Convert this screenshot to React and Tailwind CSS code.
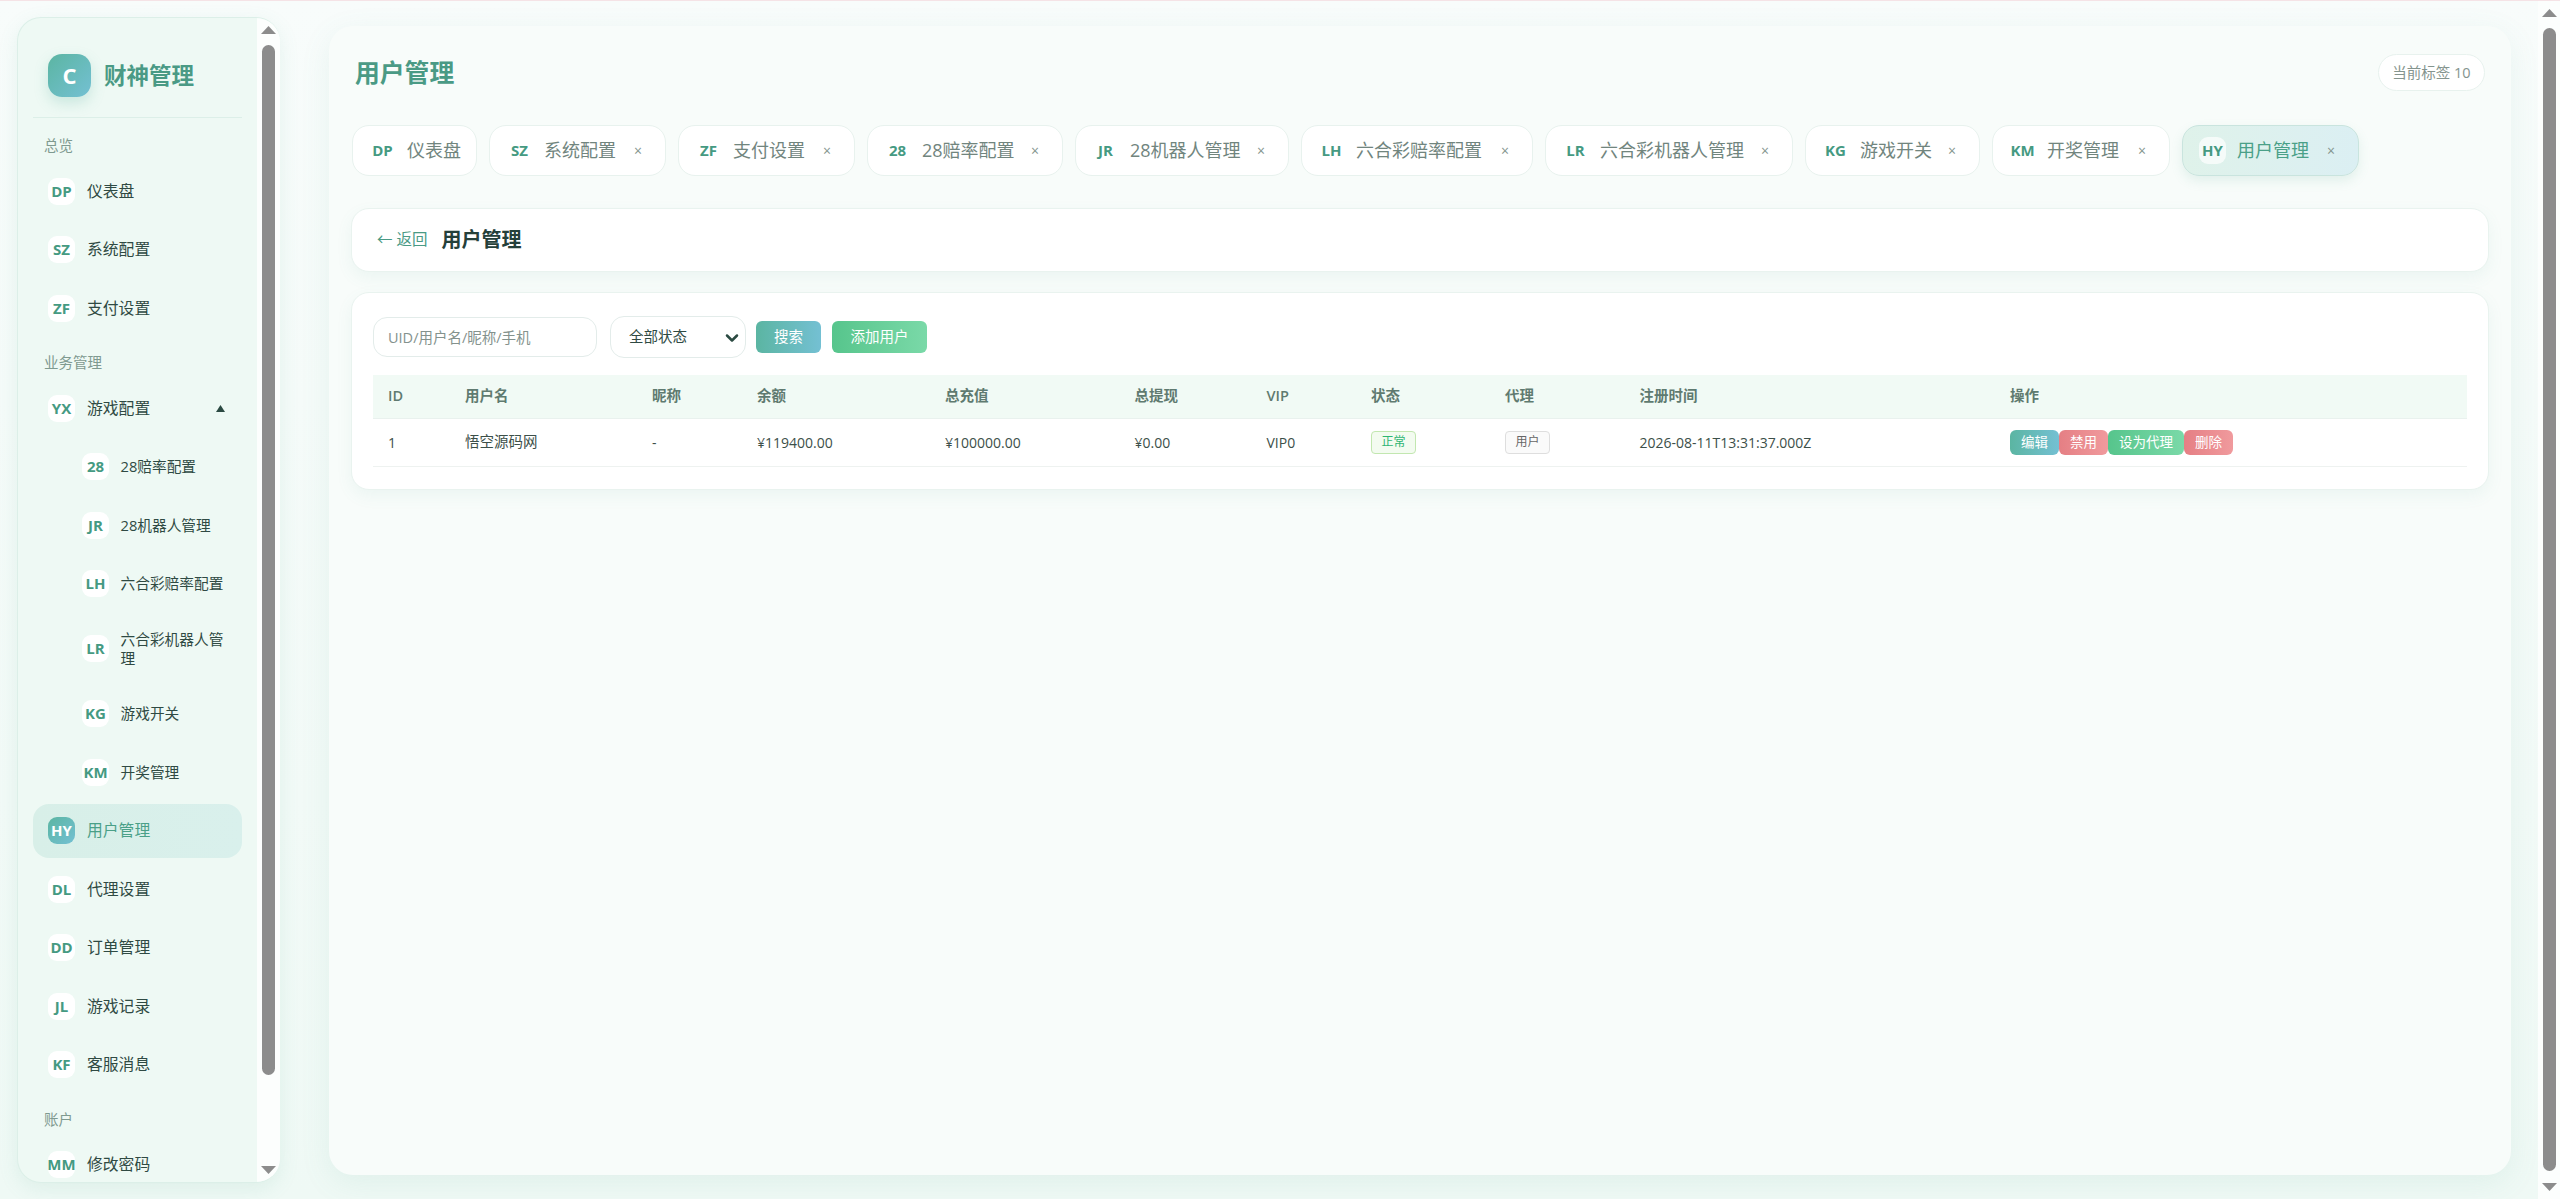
import { ChevronDown } from "lucide-react";

const tabs = [
  { code: "DP", label: "仪表盘", w: "w-[125px]", fixed: true },
  { code: "SZ", label: "系统配置", w: "w-[177px]" },
  { code: "ZF", label: "支付设置", w: "w-[177px]" },
  { code: "28", label: "28赔率配置", w: "w-[196px]" },
  { code: "JR", label: "28机器人管理", w: "w-[214px]" },
  { code: "LH", label: "六合彩赔率配置", w: "w-[232px]" },
  { code: "LR", label: "六合彩机器人管理", w: "w-[248px]" },
  { code: "KG", label: "游戏开关", w: "w-[175px]" },
  { code: "KM", label: "开奖管理", w: "w-[178px]" },
  { code: "HY", label: "用户管理", w: "w-[177px]", active: true },
];

const columns = [
  { label: "ID", w: "w-[77px]" },
  { label: "用户名", w: "w-[187px]" },
  { label: "昵称", w: "w-[105px]" },
  { label: "余额", w: "w-[188px]" },
  { label: "总充值", w: "w-[189.5px]" },
  { label: "总提现", w: "w-[132px]" },
  { label: "VIP", w: "w-[104.5px]" },
  { label: "状态", w: "w-[134px]" },
  { label: "代理", w: "w-[134.5px]" },
  { label: "注册时间", w: "w-[370.5px]" },
  { label: "操作", w: "w-[472px]" },
];

function Triangle({ down, className }) {
  return (
    <svg viewBox="0 0 15 8" preserveAspectRatio="none" className={className}>
      <polygon points={down ? "0,0 15,0 7.5,8" : "7.5,0 15,8 0,8"} fill="currentColor" />
    </svg>
  );
}

function Scrollbar({ thumb, wide }) {
  return (
    <div className={`flex shrink-0 flex-col items-center bg-[#fcfefd] ${wide}`}>
      <Triangle className="mt-[8px] h-[8px] w-[15px] shrink-0 text-[#8c8c8c]" />
      <div className={`mt-[11px] w-[13px] shrink-0 rounded-full bg-[#8c8c8c] ${thumb}`} />
      <Triangle down className="mt-auto mb-[8px] h-[8px] w-[15px] shrink-0 text-[#8c8c8c]" />
    </div>
  );
}

function SectionLabel({ children }) {
  return <div className="mb-[8px] mt-[18px] pl-[11px] text-[14.5px] leading-[20px] text-[#7f9a90]">{children}</div>;
}

function NavItem({ code, label, sub, open, active }) {
  return (
    <div
      className={`mb-[4.5px] flex min-h-[54px] items-center rounded-[16px] pr-[15px] ${sub ? "pl-[49px]" : "pl-[15px]"} ${
        active ? "bg-gradient-to-r from-[#d8efe8] to-[#d9f0ec] text-[#4aa088]" : "text-[#2f4a43]"
      }`}
    >
      <span
        className={`flex h-[27px] w-[27px] shrink-0 items-center justify-center rounded-[9px] text-[15px] font-bold ${
          active ? "bg-gradient-to-br from-[#5bb5a2] to-[#74c0d3] text-white" : "bg-white text-[#459a82]"
        }`}
      >
        {code}
      </span>
      <span className={`py-[14.5px] leading-[19px] ${sub ? "ml-[11.5px] text-[14.7px]" : "ml-[12px] text-[15.8px]"}`}>{label}</span>
      {open && <Triangle className="ml-auto mr-[2px] h-[7px] w-[9px] text-[#2b4a42]" />}
    </div>
  );
}

function Sidebar() {
  return (
    <aside className="ml-[17px] mt-[16px] flex h-[1166px] w-[263px] shrink-0 overflow-hidden rounded-[24px] border border-r-0 border-[#dcefe8] bg-[#eef9f4] shadow-[0_6px_20px_rgba(90,170,150,0.12)]">
      <div className="w-[239px] shrink-0 overflow-hidden px-[15px]">
        <div className="flex items-center border-b border-[#dcefe8] px-[15px] pb-[20px] pt-[36px]">
          <span className="flex h-[43px] w-[43px] items-center justify-center rounded-[14px] bg-gradient-to-br from-[#5bb5a2] to-[#74c0d3] text-[22px] font-bold text-white shadow-[0_6px_14px_rgba(90,180,160,0.25)]">
            C
          </span>
          <span className="ml-[13px] text-[22.5px] font-bold text-[#4a9a85]">财神管理</span>
        </div>
        <SectionLabel>总览</SectionLabel>
        <NavItem code="DP" label="仪表盘" />
        <NavItem code="SZ" label="系统配置" />
        <NavItem code="ZF" label="支付设置" />
        <SectionLabel>业务管理</SectionLabel>
        <NavItem code="YX" label="游戏配置" open />
        <NavItem code="28" label="28赔率配置" sub />
        <NavItem code="JR" label="28机器人管理" sub />
        <NavItem code="LH" label="六合彩赔率配置" sub />
        <NavItem code="LR" label="六合彩机器人管理" sub />
        <NavItem code="KG" label="游戏开关" sub />
        <NavItem code="KM" label="开奖管理" sub />
        <NavItem code="HY" label="用户管理" active />
        <NavItem code="DL" label="代理设置" />
        <NavItem code="DD" label="订单管理" />
        <NavItem code="JL" label="游戏记录" />
        <NavItem code="KF" label="客服消息" />
        <SectionLabel>账户</SectionLabel>
        <NavItem code="MM" label="修改密码" />
      </div>
      <Scrollbar wide="w-[23px]" thumb="h-[1030px]" />
    </aside>
  );
}

function Tab({ code, label, w, fixed, active }) {
  return (
    <div
      className={`flex h-[51px] shrink-0 items-center rounded-[17px] border pl-[16px] ${w} ${
        active
          ? "border-[#c9e4de] bg-gradient-to-r from-[#dff2ea] to-[#dbeff3] text-[#4aa088] shadow-[0_5px_12px_rgba(90,170,150,0.14)]"
          : "border-[#e8f2ee] bg-white text-[#71857e]"
      }`}
    >
      <span className={`flex h-[27px] w-[27px] shrink-0 items-center justify-center rounded-[9px] text-[15px] font-bold text-[#459a82] ${active ? "bg-[#f5fbf9]" : ""}`}>
        {code}
      </span>
      <span className="ml-[11px] text-[18px] whitespace-nowrap">{label}</span>
      {!fixed && <span className="ml-auto mr-[23px] text-[14px] leading-none text-[#84948e]">×</span>}
    </div>
  );
}

function ActionButton({ tone, children }) {
  return (
    <button className={`h-[25px] rounded-[6px] bg-gradient-to-r px-[11px] text-[13.5px] text-white ${tone}`}>{children}</button>
  );
}

function UsersTable() {
  const cell = "px-[15px] text-[14.5px] text-[#3c4f49] font-normal";
  const latin = "px-[15px] text-[14px] text-[#3c4f49] font-normal";
  return (
    <table className="w-[2094px] table-fixed border-collapse">
      <thead>
        <tr className="h-[43px] border-b border-[#e9f1ee] bg-[#f1faf5]">
          {columns.map((col) => (
            <th key={col.label} className={`${col.w} px-[15px] text-left text-[14.5px] font-semibold text-[#5f7a70]`}>
              {col.label}
            </th>
          ))}
        </tr>
      </thead>
      <tbody>
        <tr className="h-[48px] border-b border-[#eef2f0]">
          <td className={latin}>1</td>
          <td className={cell}>悟空源码网</td>
          <td className={latin}>-</td>
          <td className={latin}>¥119400.00</td>
          <td className={latin}>¥100000.00</td>
          <td className={latin}>¥0.00</td>
          <td className={latin}>VIP0</td>
          <td className={cell}>
            <span className="flex h-[23px] w-[45px] items-center justify-center rounded-[4px] border border-[#c2e7b0] bg-[#f3fbf0] text-[12px] text-[#2fb573]">正常</span>
          </td>
          <td className={cell}>
            <span className="flex h-[23px] w-[45px] items-center justify-center rounded-[4px] border border-[#dedede] bg-[#fafafa] text-[12px] text-[#666666]">用户</span>
          </td>
          <td className={latin}>2026-08-11T13:31:37.000Z</td>
          <td className={cell}>
            <div className="flex">
              <ActionButton tone="from-[#5bb5a2] to-[#74c0d3]">编辑</ActionButton>
              <ActionButton tone="from-[#e57f84] to-[#f09a9d]">禁用</ActionButton>
              <ActionButton tone="from-[#56c58c] to-[#7ad9a8]">设为代理</ActionButton>
              <ActionButton tone="from-[#e57f84] to-[#f09a9d]">删除</ActionButton>
            </div>
          </td>
        </tr>
      </tbody>
    </table>
  );
}

function MainPanel() {
  return (
    <main className="ml-[49px] mt-[25px] h-[1149px] w-[2182px] shrink-0 rounded-[24px] bg-[#f8fcfa] shadow-[0_8px_30px_rgba(90,170,150,0.10)]">
      <div className="flex items-start justify-between pl-[26px] pr-[26px] pt-[28px]">
        <h1 className="text-[24.8px] leading-[36px] font-bold text-[#4a9a85]">用户管理</h1>
        <div className="flex h-[37px] w-[107px] items-center justify-center rounded-full border border-[#e8f2ee] bg-white text-[14.5px] text-[#84948e]">
          当前标签 10
        </div>
      </div>
      <div className="mt-[34px] flex gap-[12px] pl-[23px]">
        {tabs.map((tab) => (
          <Tab key={tab.code} {...tab} />
        ))}
      </div>
      <div className="mx-[22px] mt-[32px] flex h-[64px] items-center rounded-[18px] border border-[#e9f3ef] bg-white px-[25px] shadow-[0_6px_16px_rgba(90,170,150,0.08)]">
        <span className="text-[15.5px] text-[#4a9a85]">← 返回</span>
        <span className="ml-[14px] text-[20px] font-bold text-[#25403a]">用户管理</span>
      </div>
      <div className="mx-[22px] mt-[20px] h-[198px] rounded-[18px] border border-[#e9f3ef] bg-white px-[21px] pt-[23px] shadow-[0_6px_16px_rgba(90,170,150,0.08)]">
        <div className="flex h-[42px] items-center">
          <input
            placeholder="UID/用户名/昵称/手机"
            className="h-[40px] w-[224px] rounded-[14px] border border-[#e3ecea] bg-white px-[14px] text-[14.5px] outline-none placeholder:text-[#84928d]"
          />
          <div className="relative ml-[13px]">
            <select className="h-[42px] w-[136px] appearance-none rounded-[14px] border border-[#e3ecea] bg-white pl-[18px] text-[14.5px] text-[#2f4a43] outline-none">
              <option>全部状态</option>
            </select>
            <ChevronDown size={20} strokeWidth={3} className="absolute right-[4px] top-[12px] text-[#2b4a42]" />
          </div>
          <button className="ml-[10px] h-[32px] w-[65px] rounded-[6px] bg-gradient-to-r from-[#5bb5a2] to-[#74c0d3] text-[14.5px] text-white">搜索</button>
          <button className="ml-[11px] h-[32px] w-[95px] rounded-[6px] bg-gradient-to-r from-[#56c58c] to-[#7ad9a8] text-[14.5px] text-white">添加用户</button>
        </div>
        <div className="mt-[17px]">
          <UsersTable />
        </div>
      </div>
    </main>
  );
}

export default function App() {
  return (
    <div className="flex h-screen flex-col overflow-hidden bg-gradient-to-b from-[#f8fcfb] to-[#eff9f5] [font-family:'Open_Sans','Noto_Sans_CJK_SC',sans-serif]">
      <div className="h-px shrink-0 bg-[#f5e3e6]" />
      <div className="flex min-h-0 flex-1">
        <Sidebar />
        <MainPanel />
        <div className="ml-auto flex">
          <Scrollbar wide="w-[22px]" thumb="h-[1143px]" />
        </div>
      </div>
    </div>
  );
}
